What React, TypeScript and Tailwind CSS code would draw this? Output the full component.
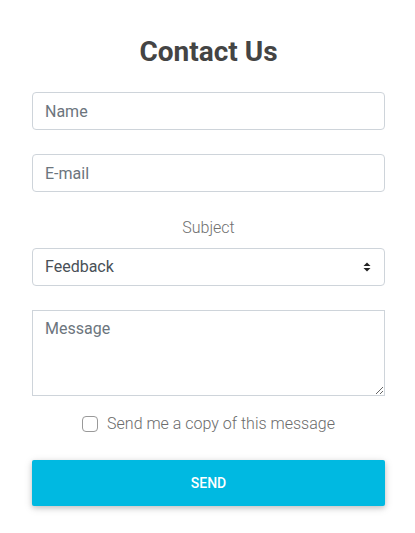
import React from 'react';

const font = { fontFamily: 'Roboto, "Liberation Sans", sans-serif' };

const SelectArrows = () => (
  <svg width="10" height="12" viewBox="0 0 10 12" className="pointer-events-none absolute right-[13px] top-1/2 -translate-y-1/2">
    <path d="M5 1.5 L8.5 5 H1.5 Z" fill="#222" />
    <path d="M5 10.5 L8.5 7 H1.5 Z" fill="#222" />
  </svg>
);

export default function App() {
  return (
    <div className="min-h-screen bg-white pl-8 pr-[30px] pt-[34px]" style={font}>
      <h1 className="mb-[22px] text-center text-[28px] font-bold leading-[36px] text-[#444444]">Contact Us</h1>
      <form className="flex flex-col">
        <input
          type="text"
          placeholder="Name"
          className="mb-6 h-[38px] w-full rounded border border-[#ced4da] px-3 text-base text-[#495057] placeholder:text-[#6c757d] outline-none"
        />
        <input
          type="email"
          placeholder="E-mail"
          className="mb-[24px] h-[38px] w-full rounded border border-[#ced4da] px-3 text-base text-[#495057] placeholder:text-[#6c757d] outline-none"
        />
        <label className="mb-[8px] text-center text-base font-light leading-6 text-[#707070]">Subject</label>
        <div className="relative mb-6">
          <select
            defaultValue="Feedback"
            className="h-[38px] w-full appearance-none rounded border border-[#ced4da] bg-white px-3 text-base text-[#495057] outline-none"
          >
            <option>Feedback</option>
            <option>Report a bug</option>
            <option>Feature request</option>
          </select>
          <SelectArrows />
        </div>
        <textarea
          placeholder="Message"
          className="mb-4 h-[86px] w-full border border-[#ced4da] px-3 py-[6px] text-base text-[#495057] placeholder:text-[#6c757d] outline-none"
        />
        <label className="mb-6 flex h-6 items-center justify-center gap-[9px] text-base font-light text-[#6b6b6b]">
          <span className="h-4 w-4 rounded-[4px] border border-[#999]" />
          Send me a copy of this message
        </label>
        <button
          type="button"
          className="h-[46px] w-full rounded-[2px] bg-[#00b9e1] text-[14px] font-medium uppercase text-white shadow-[0_2px_5px_rgba(0,0,0,0.16),0_2px_10px_rgba(0,0,0,0.12)]"
        >
          Send
        </button>
      </form>
    </div>
  );
}
